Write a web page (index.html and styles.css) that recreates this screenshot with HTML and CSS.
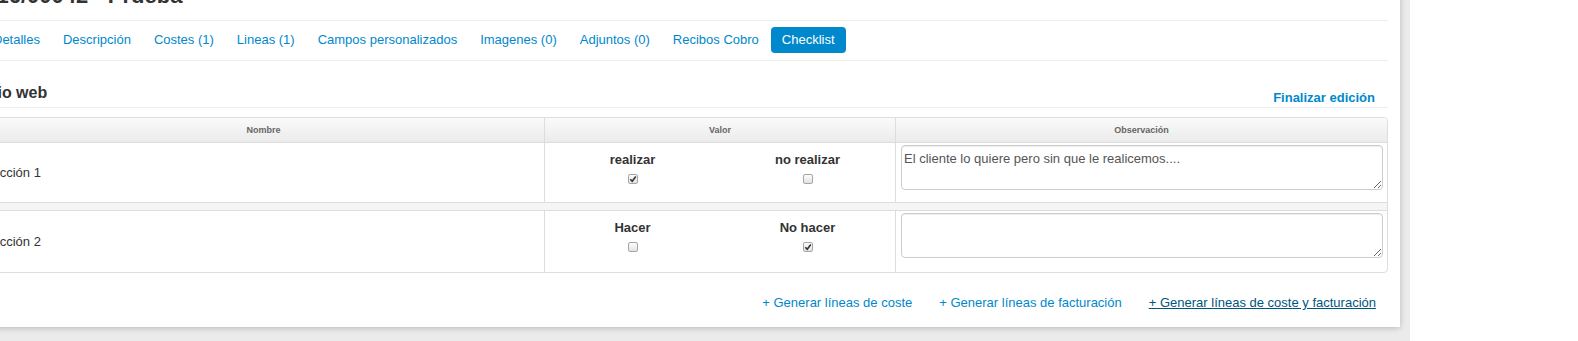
FILE: index.html
```html
<!DOCTYPE html>
<html lang="es">
<head>
<meta charset="utf-8">
<title>Checklist</title>
<link rel="stylesheet" href="styles.css">
</head>
<body>
<div class="viewport">
  <div class="card">
    <h1 class="title">2016/00042 - Prueba</h1>
    <nav class="tabs">
      <a class="tab" href="#">Detalles</a>
      <a class="tab" href="#">Descripción</a>
      <a class="tab" href="#">Costes (1)</a>
      <a class="tab" href="#">Lineas (1)</a>
      <a class="tab" href="#">Campos personalizados</a>
      <a class="tab" href="#">Imagenes (0)</a>
      <a class="tab" href="#">Adjuntos (0)</a>
      <a class="tab" href="#">Recibos Cobro</a>
      <a class="tab active" href="#">Checklist</a>
    </nav>
    <div class="section-head">
      <h2 class="section-title">Sitio web</h2>
      <a class="finish" href="#">Finalizar edición</a>
    </div>
    <div class="grid-table">
      <div class="thead">
        <div class="th">Nombre</div>
        <div class="th sep">Valor</div>
        <div class="th sep">Observación</div>
      </div>
      <div class="row row-a">
        <div class="td name">Acción 1</div>
        <div class="td sep values">
          <div class="opt"><span class="opt-label">realizar</span><span class="check on"><svg viewBox="0 0 10 10" width="10" height="10"><path d="M2.3 5.2 L4.2 7.2 L7.8 2.6" fill="none" stroke="#333" stroke-width="1.6"/></svg></span></div>
          <div class="opt"><span class="opt-label">no realizar</span><span class="check"></span></div>
        </div>
        <div class="td sep obs"><textarea class="note">El cliente lo quiere pero sin que le realicemos....</textarea></div>
      </div>
      <div class="spacer"></div>
      <div class="row row-b">
        <div class="td name">Acción 2</div>
        <div class="td sep values">
          <div class="opt"><span class="opt-label">Hacer</span><span class="check"></span></div>
          <div class="opt"><span class="opt-label">No hacer</span><span class="check on"><svg viewBox="0 0 10 10" width="10" height="10"><path d="M2.3 5.2 L4.2 7.2 L7.8 2.6" fill="none" stroke="#333" stroke-width="1.6"/></svg></span></div>
        </div>
        <div class="td sep obs"><textarea class="note"></textarea></div>
      </div>
    </div>
    <div class="actions">
      <a class="action" href="#">+ Generar líneas de coste</a>
      <a class="action" href="#">+ Generar líneas de facturación</a>
      <a class="action hover" href="#">+ Generar líneas de coste y facturación</a>
    </div>
  </div>
</div>
</body>
</html>
```

FILE: styles.css
```css
* { box-sizing: border-box; }
html, body { margin: 0; padding: 0; }
body {
  background: #fff;
  font-family: "Liberation Sans", Arial, sans-serif;
  font-size: 13px;
  color: #333;
}
a { text-decoration: none; color: #0088cc; }

.viewport {
  width: 1410px;
  height: 100vh;
  background: #ebebeb;
  display: flow-root;
  overflow: hidden;
}

.card {
  margin: -17px 10px 0 -31px;
  background: #fff;
  padding: 0 12px 15px 13px;
  box-shadow: 0 1px 6px rgba(0, 0, 0, 0.22);
}

.title {
  margin: 0 0 0 -10px;
  font-size: 22px;
  line-height: 26px;
  font-weight: bold;
  color: #333;
  padding-bottom: 11px;
  padding-left: 10px;
  border-bottom: 1px solid #eee;
  text-indent: -10px;
}

.tabs {
  display: flex;
  padding: 6px 0 7px;
  border-bottom: 1px solid #eee;
}
.tab {
  display: block;
  padding: 4px 11px;
  margin-right: 1px;
  line-height: 18px;
  font-size: 13px;
  border-radius: 4px;
  color: #0088cc;
}
.tab.active {
  background: #0088cc;
  color: #fff;
}

.section-head {
  display: flex;
  justify-content: space-between;
  align-items: flex-end;
  padding-top: 22px;
  padding-bottom: 2px;
  border-bottom: 1px solid #eee;
}
.section-title {
  margin: 0 0 2px;
  font-size: 16px;
  line-height: 20px;
  font-weight: bold;
  color: #333;
  text-indent: -5px;
}
.finish {
  font-size: 13px;
  font-weight: bold;
  line-height: 18px;
  margin-right: 13px;
  margin-bottom: -2px;
}

.grid-table {
  margin-top: 9px;
  border: 1px solid #ddd;
  border-radius: 4px;
  overflow: hidden;
}
.thead, .row {
  display: grid;
  grid-template-columns: 561px 351px 1fr;
}
.thead {
  height: 25px;
  border-bottom: 1px solid #ddd;
  background: linear-gradient(#fafafa, #ebebeb);
}
.th {
  display: flex;
  align-items: center;
  justify-content: center;
  font-size: 9px;
  font-weight: bold;
  color: #666;
}
.sep { border-left: 1px solid #ddd; }

.row-a { height: 60px; border-bottom: 1px solid #ddd; }
.row-b { height: 61px; }
.spacer {
  height: 8px;
  background: #f5f5f5;
  border-bottom: 1px solid #ddd;
}

.td.name {
  display: flex;
  align-items: center;
  padding-left: 8px;
  font-size: 13px;
  color: #333;
}
.values {
  display: grid;
  grid-template-columns: 1fr 1fr;
  padding-top: 8px;
}
.opt {
  display: flex;
  flex-direction: column;
  align-items: center;
}
.opt-label {
  font-weight: bold;
  font-size: 13px;
  line-height: 18px;
  color: #333;
}
.check {
  display: block;
  width: 10px;
  height: 10px;
  margin-top: 5px;
  border: 1px solid #a6a6a6;
  border-radius: 2px;
  background: linear-gradient(#fdfdfd, #e2e2e2);
  position: relative;
}
.check svg {
  position: absolute;
  left: -1px;
  top: -1px;
}

.obs { padding: 2px 4px 0 5px; }
.note {
  display: block;
  width: 100%;
  height: 45px;
  margin: 0;
  padding: 4px 2px;
  border: 1px solid #ccc;
  border-radius: 4px;
  box-shadow: inset 0 1px 1px rgba(0, 0, 0, 0.075);
  font-family: "Liberation Sans", Arial, sans-serif;
  font-size: 13px;
  line-height: 18px;
  color: #555;
  background: #fff;
}

.actions {
  display: flex;
  justify-content: flex-end;
  gap: 27px;
  margin-top: 21px;
  padding-right: 12px;
}
.action {
  font-size: 13px;
  line-height: 18px;
  color: #0088cc;
}
.action.hover {
  color: #005580;
  text-decoration: underline;
}
```
